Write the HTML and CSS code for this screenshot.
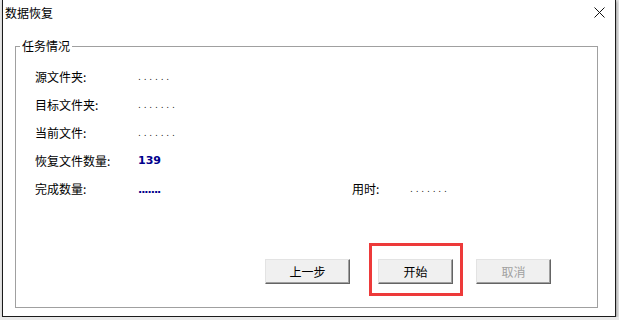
FILE: index.html
```html
<!DOCTYPE html>
<html lang="zh-CN">
<head>
    <meta charset="UTF-8">
    <title>数据恢复</title>
    <link rel="stylesheet" href="styles.css">
</head>
<body>
    <div class="window">
        <div class="titlebar">
            <span class="title">数据恢复</span>
            <span class="close">
                <svg width="11" height="11" viewBox="0 0 11 11">
                    <path d="M0.5 0.5 L10.5 10.5 M10.5 0.5 L0.5 10.5" stroke="#111" stroke-width="1" fill="none"/>
                </svg>
            </span>
        </div>

        <fieldset class="group">
            <legend>任务情况</legend>

            <div class="row">
                <span class="label">源文件夹:</span>
                <span class="dots">......</span>
            </div>
            <div class="row">
                <span class="label">目标文件夹:</span>
                <span class="dots">.......</span>
            </div>
            <div class="row">
                <span class="label">当前文件:</span>
                <span class="dots">.......</span>
            </div>
            <div class="row">
                <span class="label">恢复文件数量:</span>
                <span class="count">139</span>
            </div>
            <div class="row">
                <span class="label">完成数量:</span>
                <span class="count done">.......</span>
                <span class="label time-label">用时:</span>
                <span class="dots">.......</span>
            </div>

            <div class="buttons">
                <button class="btn wide">上一步</button>
                <span class="mark">
                    <button class="btn">开始</button>
                </span>
                <button class="btn" disabled>取消</button>
            </div>
        </fieldset>
    </div>
</body>
</html>
```

FILE: styles.css
```css
* {
  margin: 0;
  padding: 0;
  box-sizing: border-box;
}

body {
  background-color: #e9e9e9;
  font-family: "Noto Sans CJK SC", "Liberation Sans", sans-serif;
  font-size: 12px;
  color: #000;
}

.window {
  margin-left: 2px;
  width: 614px;
  height: 317px;
  background-color: #fff;
  border: 1px solid #1b1b1b;
  border-top: none;
  box-shadow: 1px 1px 3px rgba(0, 0, 0, 0.35);
}

.titlebar {
  display: flex;
  justify-content: space-between;
  align-items: center;
  height: 28px;
  padding: 0 10px 0 2px;
}

.title {
  line-height: 16px;
  margin-top: -2px;
}

.close {
  display: flex;
  margin-top: -4px;
}

.group {
  margin: 10px 0 0 12px;
  width: 583px;
  height: 270px;
  border: 1px solid #a0a0a0;
  padding: 8px 0 0 19px;
}

.group legend {
  margin-left: -15px;
  padding: 0 2px;
  line-height: 16px;
}

.row {
  display: flex;
  align-items: center;
  height: 28px;
}

.label {
  width: 103px;
}

.dots {
  letter-spacing: 2.8px;
  color: #222;
  font-family: "DejaVu Sans", sans-serif;
  font-size: 9px;
  margin-top: 2px;
}

.count {
  width: 214px;
  font-family: "DejaVu Sans", sans-serif;
  font-weight: bold;
  font-size: 11px;
  color: #00008c;
}

.done {
  letter-spacing: -1px;
  margin-top: 2px;
}

.time-label {
  width: 58px;
}

.buttons {
  display: flex;
  align-items: flex-start;
  margin-top: 41px;
  padding-left: 230px;
}

.btn {
  width: 75px;
  height: 25px;
  margin-top: 16px;
  font-family: "Noto Sans CJK SC", sans-serif;
  font-size: 12px;
  color: #000;
  background-color: #f0f0f0;
  border: 1px solid;
  border-color: #e3e3e3 #646464 #646464 #e3e3e3;
  box-shadow: inset -1px -1px 0 #a0a0a0;
}

.btn.wide {
  width: 85px;
}

.btn:disabled {
  color: #a0a0a0;
}

.mark {
  display: flex;
  width: 94px;
  height: 53px;
  margin: 0 13px 0 19px;
  border: 3px solid #ed3a3a;
  padding: 13px 0 0 6px;
}

.mark .btn {
  margin-top: 0;
}
```
